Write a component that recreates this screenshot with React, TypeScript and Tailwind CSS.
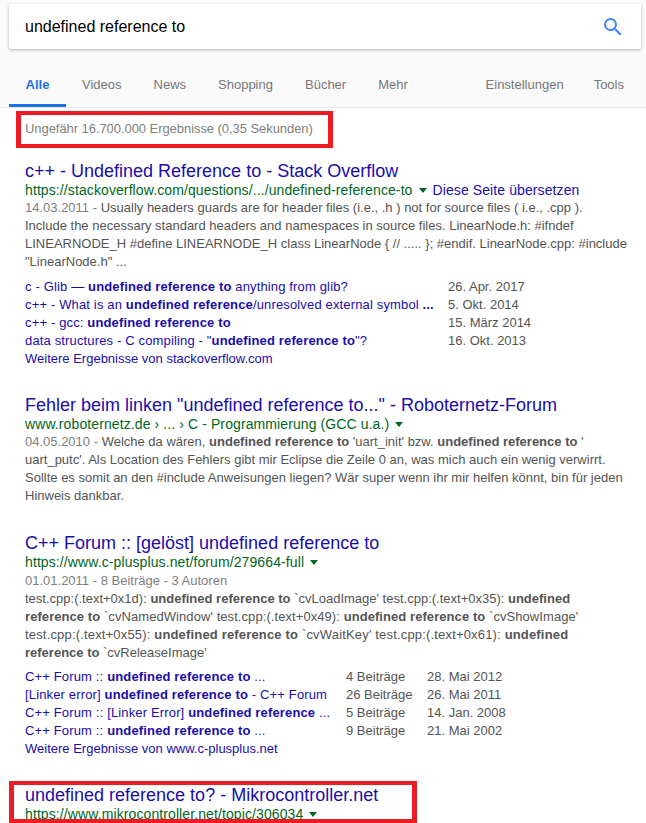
import type { ReactNode } from 'react';

function Arrow() {
  return <span className="inline-block ml-[6px] mb-[1px] align-middle w-0 h-0 border-x-[4px] border-x-transparent border-t-[5px] border-t-[#006621]" />;
}

function Title({ children }: { children: ReactNode }) {
  return <div className="text-[18px] leading-[20px] text-[#1a0dab] whitespace-nowrap">{children}</div>;
}

function Url({ children }: { children: ReactNode }) {
  return <div className="text-[14px] leading-[18px] text-[#006621] whitespace-nowrap tracking-[0.1px]">{children}</div>;
}

function Snippet({ children }: { children: ReactNode }) {
  return <div className="text-[13px] leading-[18px] text-[#545454] w-[610px]">{children}</div>;
}

const b = (s: string) => <b className="font-bold">{s}</b>;

type SiteLink = { text: ReactNode; count?: string; date: string };

function SiteLinks({ rows, more, cols, top }: { rows: SiteLink[]; more: string; cols: string; top: string }) {
  return (
    <div className={`${top} text-[13px] leading-[18px]`}>
      {rows.map((r, i) => (
        <div key={i} className={`grid ${cols} whitespace-nowrap`}>
          <div className="text-[#1a0dab] overflow-hidden tracking-[0.15px]">{r.text}</div>
          {r.count && <div className="text-[#545454]">{r.count}</div>}
          <div className="text-[#545454]">{r.date}</div>
        </div>
      ))}
      <div className="text-[#1a0dab]">{more}</div>
    </div>
  );
}

export default function App() {
  return (
    <div className="w-[646px] h-[823px] overflow-hidden bg-white font-['Liberation_Sans',Arial,sans-serif]">
      <div className="h-[108px] bg-[#fafafa] border-b border-[#ebebeb] pl-[9px] pr-[5px] pt-[4px]">
        <div className="h-[45px] bg-white rounded-[2px] shadow-[0_1px_3px_rgba(0,0,0,0.3)] flex items-center justify-between pl-[16px] pr-[16px]">
          <span className="text-[16px] text-black pt-[1px]">undefined reference to</span>
          <svg width="24" height="24" viewBox="0 0 24 24" fill="#4285f4">
            <path d="M15.5 14h-.79l-.28-.27A6.471 6.471 0 0 0 16 9.5 6.5 6.5 0 1 0 9.5 16c1.61 0 3.09-.59 4.23-1.57l.27.28v.79l5 4.99L20.49 19l-4.99-5zm-6 0C7.01 14 5 11.99 5 9.5S7.01 5 9.5 5 14 7.01 14 9.5 11.99 14 9.5 14z" />
          </svg>
        </div>
        <div className="flex mt-[15px] h-[43px] text-[13px] text-[#777]">
          <div className="w-[57px] h-[43px] border-b-[3px] border-[#1a73e8] text-[#1a73e8] font-bold text-center leading-[42px]">Alle</div>
          <div className="flex-1 flex pl-[16px] gap-[32px] leading-[42px]">
            <span>Videos</span>
            <span>News</span>
            <span>Shopping</span>
            <span>Bücher</span>
            <span>Mehr</span>
          </div>
          <div className="flex gap-[30px] leading-[42px] pr-[17px]">
            <span>Einstellungen</span>
            <span>Tools</span>
          </div>
        </div>
      </div>

      <div className="pl-[25px]">
        <div className="relative h-[38px] pt-[13px] text-[13px] leading-[16px] text-[#808080] tracking-[-0.06px]">
          Ungefähr 16.700.000 Ergebnisse (0,35 Sekunden)
          <div className="absolute left-[-9px] top-[3px] w-[317px] h-[37px] border-x-[5px] border-y-[4px] border-[#ed1c24]" />
        </div>

        <div className="mt-[15px]">
          <Title>c++ - Undefined Reference to - Stack Overflow</Title>
          <Url>
            https://stackoverflow.com/questions/.../undefined-reference-to<Arrow />
            <span className="ml-[6px] text-[#1a0dab]">Diese Seite übersetzen</span>
          </Url>
          <Snippet>
            <span className="text-[#808080]">14.03.2011 - </span>Usually headers guards are for header files (i.e., .h ) not for source files ( i.e., .cpp ).
            <br />Include the necessary standard headers and namespaces in source files. LinearNode.h: #ifndef
            <br />LINEARNODE_H #define LINEARNODE_H class LinearNode {'{'} // ..... {'}'}; #endif. LinearNode.cpp: #include
            <br />"LinearNode.h" ...
          </Snippet>
          <SiteLinks
            top="mt-[7px]"
            cols="grid-cols-[423px_1fr]"
            more="Weitere Ergebnisse von stackoverflow.com"
            rows={[
              { text: <>c - Glib — {b('undefined reference to')} anything from glib?</>, date: '26. Apr. 2017' },
              { text: <>c++ - What is an {b('undefined reference')}/unresolved external symbol {b('...')}</>, date: '5. Okt. 2014' },
              { text: <>c++ - gcc: {b('undefined reference to')}</>, date: '15. März 2014' },
              { text: <>data structures - C compiling - "{b('undefined reference to')}"?</>, date: '16. Okt. 2013' },
            ]}
          />
        </div>

        <div className="mt-[27px]">
          <Title>Fehler beim linken "undefined reference to..." - Roboternetz-Forum</Title>
          <Url>
            www.roboternetz.de › ... › C - Programmierung (GCC u.a.)<Arrow />
          </Url>
          <Snippet>
            <span className="text-[#808080]">04.05.2010 - </span>Welche da wären, {b('undefined reference to')} 'uart_init' bzw. {b('undefined reference to')} '
            <br />uart_putc'. Als Location des Fehlers gibt mir Eclipse die Zeile 0 an, was mich auch ein wenig verwirrt.
            <br />Sollte es somit an den #include Anweisungen liegen? Wär super wenn ihr mir helfen könnt, bin für jeden
            <br />Hinweis dankbar.
          </Snippet>
        </div>

        <div className="mt-[28px]">
          <Title>C++ Forum :: [gelöst] undefined reference to</Title>
          <Url>
            https://www.c-plusplus.net/forum/279664-full<Arrow />
          </Url>
          <div className="mt-[1px]">
            <Snippet>
              <span className="text-[#808080]">01.01.2011 - 8 Beiträge - 3 Autoren</span>
              <br />test.cpp:(.text+0x1d): {b('undefined reference to')} `cvLoadImage' test.cpp:(.text+0x35): {b('undefined')}
              <br /><span className="tracking-[0.07px]">{b('reference to')} `cvNamedWindow' test.cpp:(.text+0x49): {b('undefined reference to')} `cvShowImage'</span>
              <br /><span className="tracking-[0.17px]">test.cpp:(.text+0x55): {b('undefined reference to')} `cvWaitKey' test.cpp:(.text+0x61): {b('undefined')}</span>
              <br />{b('reference to')} `cvReleaseImage'
            </Snippet>
          </div>
          <SiteLinks
            top="mt-[6px]"
            cols="grid-cols-[321px_81px_1fr]"
            more="Weitere Ergebnisse von www.c-plusplus.net"
            rows={[
              { text: <>C++ Forum :: {b('undefined reference to')} ...</>, count: '4 Beiträge', date: '28. Mai 2012' },
              { text: <>[Linker error] {b('undefined reference to')} - C++ Forum</>, count: '26 Beiträge', date: '26. Mai 2011' },
              { text: <>C++ Forum :: [Linker Error] {b('undefined reference')} ...</>, count: '5 Beiträge', date: '14. Jan. 2008' },
              { text: <>C++ Forum :: {b('undefined reference to')} ...</>, count: '9 Beiträge', date: '21. Mai 2002' },
            ]}
          />
        </div>

        <div className="relative mt-[27px]">
          <Title>undefined reference to? - Mikrocontroller.net</Title>
          <Url>
            https://www.mikrocontroller.net/topic/306034<Arrow />
          </Url>
          <div className="absolute left-[-16px] top-[-4px] w-[408px] h-[42px] border-x-[5px] border-y-[4px] border-[#ed1c24]" />
        </div>
      </div>
    </div>
  );
}
